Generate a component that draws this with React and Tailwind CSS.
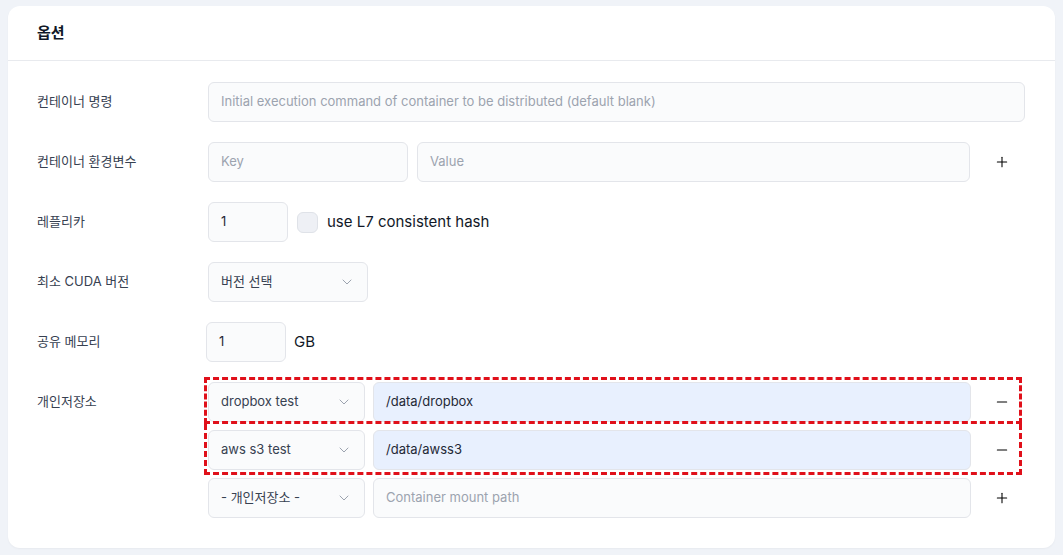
import React from "react";
import { ChevronDown, Plus, Minus } from "lucide-react";

const font = { fontFamily: "Inter, 'Noto Sans CJK KR', sans-serif" };

const inputBase =
  "h-10 rounded-md border border-[#e3e5ea] px-3 text-[13px] flex items-center";

const Field = ({ value, placeholder, className = "", filled = false }) => (
  <div className={`${inputBase} ${filled ? "bg-[#e8f0fe] text-[#111827]" : "bg-[#fafbfc]"} ${className}`}>
    {value ? (
      <span className="text-[#1f2937]">{value}</span>
    ) : (
      <span className="text-[#9ca3af]">{placeholder}</span>
    )}
  </div>
);

const Select = ({ label, className = "" }) => (
  <div className={`${inputBase} bg-[#fafbfc] justify-between text-[#374151] ${className}`}>
    <span>{label}</span>
    <ChevronDown className="w-4 h-4 text-[#9ca3af]" strokeWidth={1.5} />
  </div>
);

const Label = ({ children }) => (
  <div className="h-10 flex items-center text-[13px] text-[#374151]">{children}</div>
);

const IconSlot = ({ children }) => (
  <div className="w-[46px] shrink-0 h-10 flex items-center justify-center text-black">{children}</div>
);

const StorageRow = ({ label, path, placeholder, minus }) => (
  <div className="flex gap-[8px]">
    <Select label={label} className="w-[157px] shrink-0" />
    <Field value={path} placeholder={placeholder} filled={!!path} className="flex-1" />
    <IconSlot>
      {minus ? <Minus className="w-4 h-4" strokeWidth={1.6} /> : <Plus className="w-4 h-4" strokeWidth={1.6} />}
    </IconSlot>
  </div>
);

export default function App() {
  return (
    <div className="min-h-screen bg-[#f0f3f8] px-2 pt-[6px] pb-2" style={font}>
      <div className="bg-white rounded-xl shadow-[0_1px_2px_rgba(0,0,0,0.04)]">
        <div className="h-[55px] flex items-center px-[29px] border-b border-[#e8eaee]">
          <h2 className="text-[15px] font-bold text-[#111827]">옵션</h2>
        </div>
        <div className="grid grid-cols-[171px_1fr] gap-y-5 pl-[29px] pr-[30px] pt-[21px] pb-[30px]">
          <Label>컨테이너 명령</Label>
          <Field placeholder="Initial execution command of container to be distributed (default blank)" />

          <Label>컨테이너 환경변수</Label>
          <div className="flex gap-[9px]">
            <Field placeholder="Key" className="w-[200px] shrink-0" />
            <Field placeholder="Value" className="flex-1" />
            <IconSlot>
              <Plus className="w-4 h-4" strokeWidth={1.6} />
            </IconSlot>
          </div>

          <Label>레플리카</Label>
          <div className="flex items-center gap-[9px]">
            <Field value="1" className="w-[80px]" />
            <div className="w-[21px] h-[21px] rounded-md border border-[#dfe2e8] bg-[#eef0f5]" />
            <span className="text-[15px] text-[#111827]">use L7 consistent hash</span>
          </div>

          <Label>최소 CUDA 버전</Label>
          <div className="flex">
            <Select label="버전 선택" className="w-[160px]" />
          </div>

          <Label>공유 메모리</Label>
          <div className="flex items-center gap-2 -ml-[2px]">
            <Field value="1" className="w-[80px]" />
            <span className="text-[15px] text-[#111827]">GB</span>
          </div>

          <Label>개인저장소</Label>
          <div className="flex flex-col gap-2">
            <div className="relative flex flex-col gap-2">
              <StorageRow label="dropbox test" path="/data/dropbox" minus />
              <StorageRow label="aws s3 test" path="/data/awss3" minus />
              <div className="absolute -left-[4px] -top-[5px] right-[3px] h-[47px] border-[3px] border-dashed border-[#e0101a]" />
              <div className="absolute -left-[4px] top-[42px] right-[3px] h-[51px] border-[3px] border-t-0 border-dashed border-[#e0101a]" />
            </div>
            <StorageRow label="- 개인저장소 -" placeholder="Container mount path" />
          </div>
        </div>
      </div>
    </div>
  );
}
